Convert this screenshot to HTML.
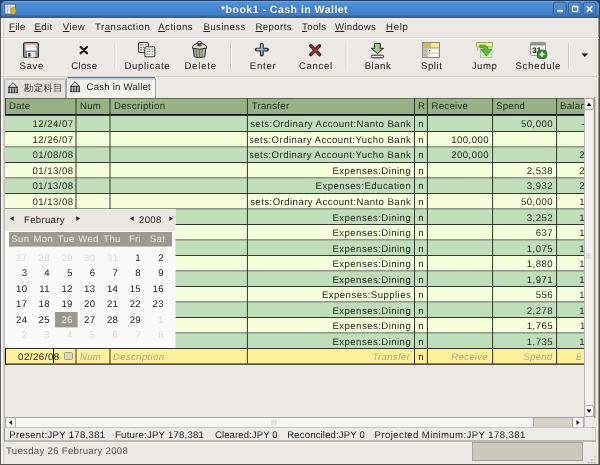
<!DOCTYPE html>
<html><head><meta charset="utf-8">
<style>
*{box-sizing:border-box;margin:0;padding:0}
html,body{text-rendering:geometricPrecision;width:600px;height:465px;overflow:hidden;background:#edebe7;font-family:"Liberation Sans",sans-serif;font-size:9.6px;color:#1e1e1e}
.a{position:absolute;white-space:nowrap}
svg{position:absolute;left:0;top:0}
u{text-decoration:underline;text-underline-offset:0.6px;text-decoration-thickness:1px}
</style></head><body>
<div style="position:absolute;left:0;top:0;width:600px;height:465px;overflow:hidden;will-change:transform">

<svg width="600" height="465" viewBox="0 0 600 465">
<defs>
<linearGradient id="tg" x1="0" y1="0" x2="0" y2="18" gradientUnits="userSpaceOnUse">
 <stop offset="0" stop-color="#77a8de"/><stop offset="0.06" stop-color="#77a8de"/><stop offset="0.16" stop-color="#4b90da"/>
 <stop offset="0.5" stop-color="#4487d0"/><stop offset="0.83" stop-color="#3e7ec5"/>
 <stop offset="0.88" stop-color="#3a6aa6"/><stop offset="1" stop-color="#2f5a8e"/>
</linearGradient>
<linearGradient id="wbg" x1="0" y1="0" x2="0" y2="1">
 <stop offset="0" stop-color="#5590d4"/><stop offset="1" stop-color="#407dc2"/>
</linearGradient>
</defs>
<rect x="0" y="0" width="600" height="465" fill="#ece9e5"/>
<rect x="0" y="0" width="600" height="8" fill="#20406a"/>
<rect x="0" y="8" width="1" height="457" fill="#5d5e5a"/>
<rect x="1" y="18" width="2" height="446" fill="#f5f4ef"/>
<rect x="3" y="18" width="1" height="446" fill="#d2cec8"/>
<rect x="4" y="98" width="1" height="320" fill="#c2beb8"/>
<rect x="599" y="8" width="1" height="457" fill="#524c47"/>
<rect x="598" y="18" width="1" height="446" fill="#9a948f"/>
<rect x="0" y="464" width="600" height="1" fill="#55524e"/>
<path d="M0 18 L0 6 Q0 0 6 0 L594 0 Q600 0 600 6 L600 18 Z" fill="#20406a"/>
<path d="M1 18 L1 6 Q1 1 6 1 L594 1 Q599 1 599 6 L599 18 Z" fill="url(#tg)"/>
<rect x="553.5" y="2.3" width="12.5" height="12" rx="2" fill="url(#wbg)" stroke="#2c5a92" stroke-width="1"/>
<rect x="554.5" y="3.3" width="10.5" height="10" rx="1.5" fill="none" stroke="#6fa2dc" stroke-width="0.6" opacity="0.6"/>
<rect x="557.0" y="9.8" width="6" height="2" fill="#f4f8fc"/>
<rect x="568.5" y="2.3" width="12.5" height="12" rx="2" fill="url(#wbg)" stroke="#2c5a92" stroke-width="1"/>
<rect x="569.5" y="3.3" width="10.5" height="10" rx="1.5" fill="none" stroke="#6fa2dc" stroke-width="0.6" opacity="0.6"/>
<rect x="572.5" y="6.4" width="5.2" height="5" fill="none" stroke="#f4f8fc" stroke-width="1.1"/>
<rect x="572.0" y="5.9" width="6.2" height="1.4" fill="#f4f8fc"/>
<rect x="583.3" y="2.3" width="12.5" height="12" rx="2" fill="url(#wbg)" stroke="#2c5a92" stroke-width="1"/>
<rect x="584.3" y="3.3" width="10.5" height="10" rx="1.5" fill="none" stroke="#6fa2dc" stroke-width="0.6" opacity="0.6"/>
<path d="M586.9 6.3L592.1999999999999 11.6M592.1999999999999 6.3L586.9 11.6" stroke="#f4f8fc" stroke-width="1.6"/>
<rect x="4.8" y="4.2" width="10.6" height="9.8" fill="#f1f3ef" stroke="#4f5d78" stroke-width="0.8"/>
<path d="M7.6 5 V13.5 M10.6 5 V13.5 M5.5 7 H15 M5.5 10 H15" stroke="#a9b3b0" stroke-width="0.7"/>
<rect x="11.2" y="7.4" width="4.6" height="7" rx="2" fill="#d9c31f" stroke="#7f700d" stroke-width="0.5"/>
<path d="M11.5 9.6 H15.5 M11.5 11.8 H15.5" stroke="#b19c12" stroke-width="0.6"/>
<rect x="1" y="37" width="598" height="1" fill="#dcd8d2"/>
<rect x="1" y="38" width="598" height="1" fill="#f9f8f6"/>
<rect x="1" y="76" width="598" height="1" fill="#d5d1cb"/>
<rect x="114.5" y="43" width="1" height="26" fill="#d0cbc4"/>
<rect x="115.5" y="43" width="1" height="26" fill="#f9f8f6"/>
<rect x="230.0" y="43" width="1" height="26" fill="#d0cbc4"/>
<rect x="231.0" y="43" width="1" height="26" fill="#f9f8f6"/>
<rect x="345.5" y="43" width="1" height="26" fill="#d0cbc4"/>
<rect x="346.5" y="43" width="1" height="26" fill="#f9f8f6"/>
<rect x="568.0" y="43" width="1" height="26" fill="#d0cbc4"/>
<rect x="569.0" y="43" width="1" height="26" fill="#f9f8f6"/>
<path d="M4 98 L4 80 Q4 78.5 5.5 78.5 L64.5 78.5 Q66 78.5 66 80 L66 98 Z" fill="#e3dfda"/>
<path d="M4.5 98 L4.5 80 Q4.5 79 5.5 79 L64.5 79 Q65.5 79 65.5 80 L65.5 98" fill="none" stroke="#b3aea6" stroke-width="1"/>
<path d="M66.5 98 L66.5 79 Q66.5 77 68.5 77 L153.5 77 Q155.5 77 155.5 79 L155.5 98 Z" fill="#f3f1ee"/>
<path d="M66.5 98 L66.5 79 Q66.5 77.5 68.5 77.5 L153.5 77.5 Q155.5 77.5 155.5 79 L155.5 98" fill="none" stroke="#a9a49c" stroke-width="1"/>
<rect x="68" y="77" width="87" height="1.5" fill="#55799f"/>
<rect x="68" y="78.5" width="87" height="1.2" fill="#b8d6f2"/>
<rect x="5" y="98" width="579" height="16" fill="#96b183"/>
<rect x="5" y="98" width="579" height="1" fill="#5d6f52"/>
<rect x="5" y="98" width="1" height="17" fill="#3d4a36"/>
<rect x="5" y="114" width="579" height="1.8" fill="#0b0d0a"/>
<rect x="5" y="116.0" width="579" height="15.0" fill="#bfdeb9"/>
<rect x="5" y="131.0" width="579" height="1" fill="#2e3a2b"/>
<rect x="5" y="132.0" width="579" height="14.5" fill="#f6ffdb"/>
<rect x="5" y="146.5" width="579" height="1" fill="#2e3a2b"/>
<rect x="5" y="147.5" width="579" height="14.5" fill="#bfdeb9"/>
<rect x="5" y="162.0" width="579" height="1" fill="#2e3a2b"/>
<rect x="5" y="163.0" width="579" height="14.5" fill="#f6ffdb"/>
<rect x="5" y="177.5" width="579" height="1" fill="#2e3a2b"/>
<rect x="5" y="178.5" width="579" height="14.5" fill="#bfdeb9"/>
<rect x="5" y="193.0" width="579" height="1" fill="#2e3a2b"/>
<rect x="5" y="194.0" width="579" height="14.5" fill="#f6ffdb"/>
<rect x="5" y="208.5" width="579" height="1" fill="#2e3a2b"/>
<rect x="5" y="209.5" width="579" height="14.5" fill="#bfdeb9"/>
<rect x="5" y="224.0" width="579" height="1" fill="#2e3a2b"/>
<rect x="5" y="225.0" width="579" height="14.5" fill="#f6ffdb"/>
<rect x="5" y="239.5" width="579" height="1" fill="#2e3a2b"/>
<rect x="5" y="240.5" width="579" height="14.5" fill="#bfdeb9"/>
<rect x="5" y="255.0" width="579" height="1" fill="#2e3a2b"/>
<rect x="5" y="256.0" width="579" height="14.5" fill="#f6ffdb"/>
<rect x="5" y="270.5" width="579" height="1" fill="#2e3a2b"/>
<rect x="5" y="271.5" width="579" height="14.5" fill="#bfdeb9"/>
<rect x="5" y="286.0" width="579" height="1" fill="#2e3a2b"/>
<rect x="5" y="287.0" width="579" height="14.5" fill="#f6ffdb"/>
<rect x="5" y="301.5" width="579" height="1" fill="#2e3a2b"/>
<rect x="5" y="302.5" width="579" height="14.5" fill="#bfdeb9"/>
<rect x="5" y="317.0" width="579" height="1" fill="#2e3a2b"/>
<rect x="5" y="318.0" width="579" height="14.5" fill="#f6ffdb"/>
<rect x="5" y="332.5" width="579" height="1" fill="#2e3a2b"/>
<rect x="5" y="333.5" width="579" height="14.5" fill="#bfdeb9"/>
<rect x="5" y="348.0" width="579" height="1" fill="#2e3a2b"/>
<rect x="5" y="349.0" width="579" height="14.5" fill="#ffef98"/>
<rect x="5" y="363.5" width="579" height="1.2" fill="#1a1a10"/>
<rect x="5" y="348" width="1" height="16" fill="#1a1a10"/>
<rect x="75.5" y="98" width="1" height="266" fill="#2e3a2b"/>
<rect x="109.5" y="98" width="1" height="266" fill="#2e3a2b"/>
<rect x="246.9" y="98" width="1" height="266" fill="#2e3a2b"/>
<rect x="414.0" y="98" width="1" height="266" fill="#2e3a2b"/>
<rect x="426.9" y="98" width="1" height="266" fill="#2e3a2b"/>
<rect x="492.1" y="98" width="1" height="266" fill="#2e3a2b"/>
<rect x="556.1" y="98" width="1" height="266" fill="#2e3a2b"/>
<rect x="584" y="98" width="10" height="319" fill="#f4f2ef"/>
<rect x="584.5" y="98.5" width="9.5" height="318" fill="none" stroke="#b8b3ab" stroke-width="1"/>
<rect x="594" y="97" width="1" height="321" fill="#a09a93"/>
<rect x="595" y="97" width="1" height="321" fill="#c8c2bb"/>
<rect x="584.5" y="98.5" width="9" height="11" rx="1.5" fill="#f8f7f5" stroke="#b0aba3"/>
<rect x="584.5" y="405.5" width="9" height="11" rx="1.5" fill="#f8f7f5" stroke="#b0aba3"/>
<path d="M586.5 106 L589 102.5 L591.5 106 Z" fill="#111"/>
<path d="M586.5 409.5 L589 413 L591.5 409.5 Z" fill="#111"/>
<rect x="586" y="253.5" width="5" height="0.8" fill="#c9c4bc"/>
<rect x="586" y="255.5" width="5" height="0.8" fill="#c9c4bc"/>
<rect x="586" y="257.5" width="5" height="0.8" fill="#c9c4bc"/>
<rect x="5" y="417.5" width="579" height="10" fill="#d6d2ca" stroke="#a39e96" stroke-width="1"/>
<rect x="5.5" y="417.5" width="528" height="10" rx="1.5" fill="#f6f5f2" stroke="#b0aba3"/>
<rect x="5.5" y="417.5" width="10" height="10" rx="1.5" fill="#f8f7f5" stroke="#b0aba3"/>
<rect x="572.5" y="417.5" width="11" height="10" rx="1.5" fill="#f8f7f5" stroke="#b0aba3"/>
<path d="M12 420 L9 422.5 L12 425 Z" fill="#111"/>
<path d="M576.5 420 L579.5 422.5 L576.5 425 Z" fill="#111"/>
<rect x="271.5" y="420" width="0.8" height="5" fill="#c9c4bc"/>
<rect x="273.5" y="420" width="0.8" height="5" fill="#c9c4bc"/>
<rect x="275.5" y="420" width="0.8" height="5" fill="#c9c4bc"/>
<rect x="4.5" y="427.5" width="591" height="13.5" fill="#edebe7" stroke="#c9c4bc" stroke-width="1"/>
<rect x="4" y="428" width="1" height="13.5" fill="#9d988f"/>
<rect x="4" y="440.5" width="592" height="1" fill="#9d988f"/>
<rect x="472.5" y="442.5" width="110" height="18" fill="#cdc8bd" stroke="#a9a499" stroke-width="1"/>
<rect x="594" y="456" width="1.5" height="1.5" fill="#bdb8b0"/>
<rect x="591" y="459" width="1.5" height="1.5" fill="#bdb8b0"/>
<rect x="594" y="459" width="1.5" height="1.5" fill="#bdb8b0"/>
<rect x="588" y="462" width="1.5" height="1.5" fill="#bdb8b0"/>
<rect x="591" y="462" width="1.5" height="1.5" fill="#bdb8b0"/>
<rect x="594" y="462" width="1.5" height="1.5" fill="#bdb8b0"/>
<rect x="23.5" y="42.5" width="15" height="15" rx="1.8" fill="#85909c" stroke="#2c2f33" stroke-width="1.1"/>
<rect x="25.5" y="43.5" width="11" height="7" fill="#f6f6f6"/><rect x="25.5" y="43.5" width="11" height="1.3" fill="#d98a8a"/>
<rect x="25.5" y="46.5" width="11" height="0.6" fill="#f0c8c8"/>
<rect x="27" y="52" width="8.5" height="5.5" fill="#e4e6e8"/><rect x="28.3" y="53" width="2.2" height="3.6" fill="#2a2a2a"/>
<path d="M80.6 47 L87 53.3 M87 47 L80.6 53.3" stroke="#111" stroke-width="2.1" stroke-linecap="round"/>
<rect x="138.5" y="42.5" width="10" height="10" rx="1.5" fill="#f4f4f4" stroke="#383838" stroke-width="1.1"/>
<rect x="140.0" y="44.2" width="2" height="1.2" fill="#8a8a8a"/>
<rect x="142.6" y="44.2" width="1.4" height="1.2" fill="#8a8a8a"/>
<rect x="145.2" y="44.2" width="1.4" height="1.2" fill="#8a8a8a"/>
<rect x="140.0" y="46.7" width="2" height="1.2" fill="#8a8a8a"/>
<rect x="142.6" y="46.7" width="1.4" height="1.2" fill="#8a8a8a"/>
<rect x="145.2" y="46.7" width="1.4" height="1.2" fill="#8a8a8a"/>
<rect x="140.0" y="49.2" width="2" height="1.2" fill="#8a8a8a"/>
<rect x="142.6" y="49.2" width="1.4" height="1.2" fill="#8a8a8a"/>
<rect x="145.2" y="49.2" width="1.4" height="1.2" fill="#8a8a8a"/>
<rect x="144.8" y="46.8" width="10" height="10" rx="1.5" fill="#f4f4f4" stroke="#383838" stroke-width="1.1"/>
<rect x="146.3" y="48.5" width="2" height="1.2" fill="#8a8a8a"/>
<rect x="148.9" y="48.5" width="1.4" height="1.2" fill="#8a8a8a"/>
<rect x="151.5" y="48.5" width="1.4" height="1.2" fill="#8a8a8a"/>
<rect x="146.3" y="51.0" width="2" height="1.2" fill="#8a8a8a"/>
<rect x="148.9" y="51.0" width="1.4" height="1.2" fill="#8a8a8a"/>
<rect x="151.5" y="51.0" width="1.4" height="1.2" fill="#8a8a8a"/>
<rect x="146.3" y="53.5" width="2" height="1.2" fill="#8a8a8a"/>
<rect x="148.9" y="53.5" width="1.4" height="1.2" fill="#8a8a8a"/>
<rect x="151.5" y="53.5" width="1.4" height="1.2" fill="#8a8a8a"/>
<path d="M193.2 48.5 L194.2 56.8 Q199.5 58.6 204.8 56.8 L205.8 48.5 Z" fill="#a3a395" stroke="#2b2b25" stroke-width="1"/>
<path d="M196.3 49.5 L196.8 56.8 M199.5 50 L199.5 57.5 M202.7 49.5 L202.2 56.8" stroke="#6c6c60" stroke-width="0.9"/>
<path d="M203.5 49.5 L203 56.5" stroke="#e8e8e0" stroke-width="0.6"/>
<path d="M192.3 48.2 Q192.3 43.6 199.5 43.3 Q206.7 43.6 206.7 48.2 Q199.5 50.2 192.3 48.2 Z" fill="#dadacb" stroke="#2b2b25" stroke-width="1"/>
<path d="M196.8 43.6 Q197 41.5 199.5 41.4 Q202 41.5 202.2 43.6" fill="none" stroke="#2b2b25" stroke-width="1"/>
<ellipse cx="199.5" cy="45.2" rx="2.3" ry="1.1" fill="#3c3c34"/>
<path d="M261.8 44.6 V54.6 M256.6 49.6 H267" stroke="#1f2326" stroke-width="3.8" stroke-linecap="round"/>
<path d="M261.8 45 V54.2 M257 49.6 H266.6" stroke="#8aa3bf" stroke-width="1.8" stroke-linecap="round"/>
<path d="M261.8 45.2 V49 M257.2 49.2 H261" stroke="#c6d6e8" stroke-width="0.8" stroke-linecap="round"/>
<path d="M310.8 45.8 L319.6 54.6 M319.6 45.8 L310.8 54.6" stroke="#3a1c20" stroke-width="3.4" stroke-linecap="round"/>
<path d="M311.3 46.3 L319.1 54.1 M319.1 46.3 L311.3 54.1" stroke="#a23341" stroke-width="1.6" stroke-linecap="round"/>
<defs><linearGradient id="bg1" x1="0" y1="0" x2="1" y2="0"><stop offset="0" stop-color="#cfe3c0"/><stop offset="0.5" stop-color="#a6c794"/><stop offset="1" stop-color="#6e9460"/></linearGradient></defs>
<path d="M374.6 43.5 H380.4 V48.3 H383.6 L377.5 53.6 L371.4 48.3 H374.6 Z" fill="url(#bg1)" stroke="#1f2a1a" stroke-width="1" stroke-linejoin="round"/>
<rect x="371.5" y="55.2" width="12" height="2.6" rx="1" fill="#e4eadc" stroke="#262b22" stroke-width="1"/>
<rect x="422.5" y="42.5" width="17" height="15" fill="#d6d4ce" stroke="#8d8b86" stroke-width="1"/>
<rect x="423" y="43" width="8.5" height="4.4" fill="#c2c35e"/><rect x="431.5" y="43" width="7.5" height="4.4" fill="#eef07e"/>
<rect x="423" y="47.4" width="16" height="0.8" fill="#a9a7a0"/>
<rect x="423" y="48.2" width="4.6" height="9" fill="#c3c1bb"/>
<rect x="428.3" y="49.3" width="10" height="3" fill="#fbfbfb"/><rect x="428.3" y="53.6" width="10" height="3" fill="#fbfbfb"/>
<rect x="429" y="50" width="1.3" height="1.3" fill="#333"/>
<rect x="424.5" y="50.3" width="1.5" height="0.8" fill="#8d8b86"/><rect x="424.5" y="54.5" width="1.5" height="0.8" fill="#8d8b86"/>
<rect x="480.5" y="47" width="11.5" height="10.5" fill="#d3efc2" stroke="#a6c894" stroke-width="0.8"/>
<rect x="477" y="47.5" width="1.4" height="3.2" fill="#b9bdb5"/>
<rect x="476.5" y="42.5" width="16" height="4.2" fill="#e6f09a" stroke="#a4ae58" stroke-width="1"/>
<path d="M479.8 45.3 Q487.8 43.6 488 49.3 L491.8 49.3 L486.4 56.2 L481 49.3 L484.6 49.3 Q484.3 47.3 479.8 47.6 Z" fill="#62bb2e" stroke="#3a8a1e" stroke-width="0.7" stroke-linejoin="round"/>
<rect x="530.5" y="42.5" width="15" height="13" rx="1" fill="#f1f1ef" stroke="#9a9a96" stroke-width="1"/>
<rect x="530.5" y="42.5" width="15" height="3" fill="#8f8f8b"/>
<text x="532.3" y="53" font-family="Liberation Sans" font-weight="bold" font-size="8" fill="#222">31</text>
<rect x="537.3" y="50.2" width="9.4" height="8.2" rx="2.5" fill="#2f8f2c" stroke="#1b5f19" stroke-width="0.7"/>
<path d="M542 51.8 V56.8 M539.5 54.3 H544.5" stroke="#e2ffd8" stroke-width="1.7"/>
<path d="M581.5 53.5 L588 53.5 L584.75 57 Z" fill="#111"/>
<path d="M8.6 87.2 L13 82.8 L17.4 87.2 Z" fill="#f7f7f7" stroke="#2a2a2a" stroke-width="0.9" stroke-linejoin="round"/>
<rect x="8" y="87.2" width="10" height="1.1" fill="#2a2a2a"/>
<rect x="8.3" y="88.3" width="9.4" height="3.6" fill="#c8c8c8"/>
<rect x="8.4" y="88.3" width="1.3" height="3.6" fill="#3a3a3a"/>
<rect x="11.15" y="88.3" width="1.3" height="3.6" fill="#3a3a3a"/>
<rect x="13.9" y="88.3" width="1.3" height="3.6" fill="#3a3a3a"/>
<rect x="16.65" y="88.3" width="1.3" height="3.6" fill="#3a3a3a"/>
<rect x="8" y="91.9" width="10" height="1.2" fill="#2a2a2a"/>
<rect x="9.8" y="92.1" width="0.8" height="0.8" fill="#bbb"/>
<rect x="12.55" y="92.1" width="0.8" height="0.8" fill="#bbb"/>
<rect x="15.3" y="92.1" width="0.8" height="0.8" fill="#bbb"/>
<rect x="18.05" y="92.1" width="0.8" height="0.8" fill="#bbb"/>
<path d="M70.6 86.2 L75 81.8 L79.4 86.2 Z" fill="#f7f7f7" stroke="#2a2a2a" stroke-width="0.9" stroke-linejoin="round"/>
<rect x="70" y="86.2" width="10" height="1.1" fill="#2a2a2a"/>
<rect x="70.3" y="87.3" width="9.4" height="3.6" fill="#c8c8c8"/>
<rect x="70.4" y="87.3" width="1.3" height="3.6" fill="#3a3a3a"/>
<rect x="73.15" y="87.3" width="1.3" height="3.6" fill="#3a3a3a"/>
<rect x="75.9" y="87.3" width="1.3" height="3.6" fill="#3a3a3a"/>
<rect x="78.65" y="87.3" width="1.3" height="3.6" fill="#3a3a3a"/>
<rect x="70" y="90.9" width="10" height="1.2" fill="#2a2a2a"/>
<rect x="71.8" y="91.1" width="0.8" height="0.8" fill="#bbb"/>
<rect x="74.55" y="91.1" width="0.8" height="0.8" fill="#bbb"/>
<rect x="77.3" y="91.1" width="0.8" height="0.8" fill="#bbb"/>
<rect x="80.05" y="91.1" width="0.8" height="0.8" fill="#bbb"/>
</svg>
<div class="a" style="left:221px;top:3.57px;font-size:10.6px;line-height:12.72px;color:#ffffff;letter-spacing:0.45px;font-weight:bold;text-shadow:0 0 1px #274a78;">*book1 - Cash in Wallet</div>
<div class="a" style="left:9px;top:22.41px;font-size:9.6px;line-height:11.52px;color:#202020;letter-spacing:0.3px;"><u>F</u>ile</div>
<div class="a" style="left:34.5px;top:22.41px;font-size:9.6px;line-height:11.52px;color:#202020;letter-spacing:0.4px;"><u>E</u>dit</div>
<div class="a" style="left:62.8px;top:22.41px;font-size:9.6px;line-height:11.52px;color:#202020;letter-spacing:0.4px;"><u>V</u>iew</div>
<div class="a" style="left:95px;top:22.41px;font-size:9.6px;line-height:11.52px;color:#202020;letter-spacing:0.5px;">Tr<u>a</u>nsaction</div>
<div class="a" style="left:158.2px;top:22.41px;font-size:9.6px;line-height:11.52px;color:#202020;letter-spacing:0.5px;"><u>A</u>ctions</div>
<div class="a" style="left:203.5px;top:22.41px;font-size:9.6px;line-height:11.52px;color:#202020;letter-spacing:0.4px;"><u>B</u>usiness</div>
<div class="a" style="left:255.5px;top:22.41px;font-size:9.6px;line-height:11.52px;color:#202020;letter-spacing:0.4px;"><u>R</u>eports</div>
<div class="a" style="left:302px;top:22.41px;font-size:9.6px;line-height:11.52px;color:#202020;letter-spacing:0.4px;"><u>T</u>ools</div>
<div class="a" style="left:335px;top:22.41px;font-size:9.6px;line-height:11.52px;color:#202020;letter-spacing:0.3px;"><u>W</u>indows</div>
<div class="a" style="left:386px;top:22.41px;font-size:9.6px;line-height:11.52px;color:#202020;letter-spacing:0.7px;"><u>H</u>elp</div>
<div class="a" style="left:19.6px;top:60.51px;font-size:9.6px;line-height:11.52px;color:#202020;letter-spacing:0.6px;">Save</div>
<div class="a" style="left:71.3px;top:60.51px;font-size:9.6px;line-height:11.52px;color:#202020;letter-spacing:0.3px;">Close</div>
<div class="a" style="left:124.5px;top:60.51px;font-size:9.6px;line-height:11.52px;color:#202020;letter-spacing:0.63px;">Duplicate</div>
<div class="a" style="left:184.4px;top:60.51px;font-size:9.6px;line-height:11.52px;color:#202020;letter-spacing:0.8px;">Delete</div>
<div class="a" style="left:249.7px;top:60.51px;font-size:9.6px;line-height:11.52px;color:#202020;letter-spacing:0.8px;">Enter</div>
<div class="a" style="left:299px;top:60.51px;font-size:9.6px;line-height:11.52px;color:#202020;letter-spacing:0.63px;">Cancel</div>
<div class="a" style="left:364.7px;top:60.51px;font-size:9.6px;line-height:11.52px;color:#202020;letter-spacing:0.5px;">Blank</div>
<div class="a" style="left:421px;top:60.51px;font-size:9.6px;line-height:11.52px;color:#202020;letter-spacing:0.55px;">Split</div>
<div class="a" style="left:471.7px;top:60.51px;font-size:9.6px;line-height:11.52px;color:#202020;letter-spacing:0.55px;">Jump</div>
<div class="a" style="left:515.5px;top:60.51px;font-size:9.6px;line-height:11.52px;color:#202020;letter-spacing:0.7px;">Schedule</div>
<div class="a" style="left:24px;top:82.79px;font-size:9.2px;line-height:11.04px;color:#333;letter-spacing:0.6px;">勘定科目</div>
<div class="a" style="left:86.6px;top:82.41px;font-size:9.6px;line-height:11.52px;color:#222;letter-spacing:0.2px;">Cash in Wallet</div>
<div class="a" style="left:9px;top:101.01px;font-size:9.6px;line-height:11.52px;color:#1f2a1c;letter-spacing:0.3px;">Date</div>
<div class="a" style="left:80px;top:101.01px;font-size:9.6px;line-height:11.52px;color:#1f2a1c;letter-spacing:0.3px;">Num</div>
<div class="a" style="left:114px;top:101.01px;font-size:9.6px;line-height:11.52px;color:#1f2a1c;letter-spacing:0.3px;">Description</div>
<div class="a" style="left:251.7px;top:101.01px;font-size:9.6px;line-height:11.52px;color:#1f2a1c;letter-spacing:0.3px;">Transfer</div>
<div class="a" style="left:418px;top:101.01px;font-size:9.6px;line-height:11.52px;color:#1f2a1c;letter-spacing:0.3px;">R</div>
<div class="a" style="left:431.5px;top:101.01px;font-size:9.6px;line-height:11.52px;color:#1f2a1c;letter-spacing:0.3px;">Receive</div>
<div class="a" style="left:496px;top:101.01px;font-size:9.6px;line-height:11.52px;color:#1f2a1c;letter-spacing:0.3px;">Spend</div>
<div class="a" style="left:557px;top:98px;width:27px;height:17px;overflow:hidden">
<div class="a" style="left:3px;top:3.01px;font-size:9.6px;line-height:11.52px;color:#1f2a1c;letter-spacing:0.3px;">Balance</div>
</div>
<div class="a" style="left:5px;top:116px;width:579px;height:250px;overflow:hidden">
<div class="a" style="left:0px;top:3.21px;font-size:9.6px;line-height:11.52px;color:#1e261c;letter-spacing:0.45px;width:68.5px;text-align:right;">12/24/07</div>
<div class="a" style="left:245px;top:0;width:164px;height:240px;overflow:hidden">
<div class="a" style="left:-200px;top:3.21px;font-size:9.6px;line-height:11.52px;color:#1e261c;letter-spacing:0.45px;width:361.2px;text-align:right;">Assets:Ordinary Account:Nanto Bank</div>
</div>
<div class="a" style="left:409.5px;top:3.21px;font-size:9.6px;line-height:11.52px;color:#1e261c;letter-spacing:0.3px;width:13px;text-align:center;">n</div>
<div class="a" style="left:0px;top:3.21px;font-size:9.6px;line-height:11.52px;color:#1e261c;letter-spacing:0.45px;width:548px;text-align:right;">50,000</div>
<div class="a" style="left:0px;top:3.21px;font-size:9.6px;line-height:11.52px;color:#1e261c;letter-spacing:0.45px;width:612px;text-align:right;">-50,000</div>
<div class="a" style="left:0px;top:18.76px;font-size:9.6px;line-height:11.52px;color:#1e261c;letter-spacing:0.45px;width:68.5px;text-align:right;">12/26/07</div>
<div class="a" style="left:245px;top:0;width:164px;height:240px;overflow:hidden">
<div class="a" style="left:-200px;top:18.76px;font-size:9.6px;line-height:11.52px;color:#1e261c;letter-spacing:0.45px;width:361.2px;text-align:right;">Assets:Ordinary Account:Yucho Bank</div>
</div>
<div class="a" style="left:409.5px;top:18.76px;font-size:9.6px;line-height:11.52px;color:#1e261c;letter-spacing:0.3px;width:13px;text-align:center;">n</div>
<div class="a" style="left:0px;top:18.76px;font-size:9.6px;line-height:11.52px;color:#1e261c;letter-spacing:0.45px;width:484px;text-align:right;">100,000</div>
<div class="a" style="left:0px;top:18.76px;font-size:9.6px;line-height:11.52px;color:#1e261c;letter-spacing:0.45px;width:612px;text-align:right;">50,000</div>
<div class="a" style="left:0px;top:34.31px;font-size:9.6px;line-height:11.52px;color:#1e261c;letter-spacing:0.45px;width:68.5px;text-align:right;">01/08/08</div>
<div class="a" style="left:245px;top:0;width:164px;height:240px;overflow:hidden">
<div class="a" style="left:-200px;top:34.31px;font-size:9.6px;line-height:11.52px;color:#1e261c;letter-spacing:0.45px;width:361.2px;text-align:right;">Assets:Ordinary Account:Yucho Bank</div>
</div>
<div class="a" style="left:409.5px;top:34.31px;font-size:9.6px;line-height:11.52px;color:#1e261c;letter-spacing:0.3px;width:13px;text-align:center;">n</div>
<div class="a" style="left:0px;top:34.31px;font-size:9.6px;line-height:11.52px;color:#1e261c;letter-spacing:0.45px;width:484px;text-align:right;">200,000</div>
<div class="a" style="left:0px;top:34.31px;font-size:9.6px;line-height:11.52px;color:#1e261c;letter-spacing:0.45px;width:612px;text-align:right;">250,000</div>
<div class="a" style="left:0px;top:49.86px;font-size:9.6px;line-height:11.52px;color:#1e261c;letter-spacing:0.45px;width:68.5px;text-align:right;">01/13/08</div>
<div class="a" style="left:245px;top:0;width:164px;height:240px;overflow:hidden">
<div class="a" style="left:-200px;top:49.86px;font-size:9.6px;line-height:11.52px;color:#1e261c;letter-spacing:0.45px;width:361.2px;text-align:right;">Expenses:Dining</div>
</div>
<div class="a" style="left:409.5px;top:49.86px;font-size:9.6px;line-height:11.52px;color:#1e261c;letter-spacing:0.3px;width:13px;text-align:center;">n</div>
<div class="a" style="left:0px;top:49.86px;font-size:9.6px;line-height:11.52px;color:#1e261c;letter-spacing:0.45px;width:548px;text-align:right;">2,538</div>
<div class="a" style="left:0px;top:49.86px;font-size:9.6px;line-height:11.52px;color:#1e261c;letter-spacing:0.45px;width:612px;text-align:right;">247,462</div>
<div class="a" style="left:0px;top:65.41px;font-size:9.6px;line-height:11.52px;color:#1e261c;letter-spacing:0.45px;width:68.5px;text-align:right;">01/13/08</div>
<div class="a" style="left:245px;top:0;width:164px;height:240px;overflow:hidden">
<div class="a" style="left:-200px;top:65.41px;font-size:9.6px;line-height:11.52px;color:#1e261c;letter-spacing:0.45px;width:361.2px;text-align:right;">Expenses:Education</div>
</div>
<div class="a" style="left:409.5px;top:65.41px;font-size:9.6px;line-height:11.52px;color:#1e261c;letter-spacing:0.3px;width:13px;text-align:center;">n</div>
<div class="a" style="left:0px;top:65.41px;font-size:9.6px;line-height:11.52px;color:#1e261c;letter-spacing:0.45px;width:548px;text-align:right;">3,932</div>
<div class="a" style="left:0px;top:65.41px;font-size:9.6px;line-height:11.52px;color:#1e261c;letter-spacing:0.45px;width:612px;text-align:right;">243,530</div>
<div class="a" style="left:0px;top:80.96px;font-size:9.6px;line-height:11.52px;color:#1e261c;letter-spacing:0.45px;width:68.5px;text-align:right;">01/13/08</div>
<div class="a" style="left:245px;top:0;width:164px;height:240px;overflow:hidden">
<div class="a" style="left:-200px;top:80.96px;font-size:9.6px;line-height:11.52px;color:#1e261c;letter-spacing:0.45px;width:361.2px;text-align:right;">Assets:Ordinary Account:Nanto Bank</div>
</div>
<div class="a" style="left:409.5px;top:80.96px;font-size:9.6px;line-height:11.52px;color:#1e261c;letter-spacing:0.3px;width:13px;text-align:center;">n</div>
<div class="a" style="left:0px;top:80.96px;font-size:9.6px;line-height:11.52px;color:#1e261c;letter-spacing:0.45px;width:548px;text-align:right;">50,000</div>
<div class="a" style="left:0px;top:80.96px;font-size:9.6px;line-height:11.52px;color:#1e261c;letter-spacing:0.45px;width:612px;text-align:right;">193,530</div>
<div class="a" style="left:0px;top:96.51px;font-size:9.6px;line-height:11.52px;color:#1e261c;letter-spacing:0.45px;width:68.5px;text-align:right;">01/13/08</div>
<div class="a" style="left:245px;top:0;width:164px;height:240px;overflow:hidden">
<div class="a" style="left:-200px;top:96.51px;font-size:9.6px;line-height:11.52px;color:#1e261c;letter-spacing:0.45px;width:361.2px;text-align:right;">Expenses:Dining</div>
</div>
<div class="a" style="left:409.5px;top:96.51px;font-size:9.6px;line-height:11.52px;color:#1e261c;letter-spacing:0.3px;width:13px;text-align:center;">n</div>
<div class="a" style="left:0px;top:96.51px;font-size:9.6px;line-height:11.52px;color:#1e261c;letter-spacing:0.45px;width:548px;text-align:right;">3,252</div>
<div class="a" style="left:0px;top:96.51px;font-size:9.6px;line-height:11.52px;color:#1e261c;letter-spacing:0.45px;width:612px;text-align:right;">190,278</div>
<div class="a" style="left:0px;top:112.06px;font-size:9.6px;line-height:11.52px;color:#1e261c;letter-spacing:0.45px;width:68.5px;text-align:right;">01/13/08</div>
<div class="a" style="left:245px;top:0;width:164px;height:240px;overflow:hidden">
<div class="a" style="left:-200px;top:112.06px;font-size:9.6px;line-height:11.52px;color:#1e261c;letter-spacing:0.45px;width:361.2px;text-align:right;">Expenses:Dining</div>
</div>
<div class="a" style="left:409.5px;top:112.06px;font-size:9.6px;line-height:11.52px;color:#1e261c;letter-spacing:0.3px;width:13px;text-align:center;">n</div>
<div class="a" style="left:0px;top:112.06px;font-size:9.6px;line-height:11.52px;color:#1e261c;letter-spacing:0.45px;width:548px;text-align:right;">637</div>
<div class="a" style="left:0px;top:112.06px;font-size:9.6px;line-height:11.52px;color:#1e261c;letter-spacing:0.45px;width:612px;text-align:right;">189,641</div>
<div class="a" style="left:0px;top:127.61px;font-size:9.6px;line-height:11.52px;color:#1e261c;letter-spacing:0.45px;width:68.5px;text-align:right;">01/13/08</div>
<div class="a" style="left:245px;top:0;width:164px;height:240px;overflow:hidden">
<div class="a" style="left:-200px;top:127.61px;font-size:9.6px;line-height:11.52px;color:#1e261c;letter-spacing:0.45px;width:361.2px;text-align:right;">Expenses:Dining</div>
</div>
<div class="a" style="left:409.5px;top:127.61px;font-size:9.6px;line-height:11.52px;color:#1e261c;letter-spacing:0.3px;width:13px;text-align:center;">n</div>
<div class="a" style="left:0px;top:127.61px;font-size:9.6px;line-height:11.52px;color:#1e261c;letter-spacing:0.45px;width:548px;text-align:right;">1,075</div>
<div class="a" style="left:0px;top:127.61px;font-size:9.6px;line-height:11.52px;color:#1e261c;letter-spacing:0.45px;width:612px;text-align:right;">188,566</div>
<div class="a" style="left:0px;top:143.16px;font-size:9.6px;line-height:11.52px;color:#1e261c;letter-spacing:0.45px;width:68.5px;text-align:right;">01/13/08</div>
<div class="a" style="left:245px;top:0;width:164px;height:240px;overflow:hidden">
<div class="a" style="left:-200px;top:143.16px;font-size:9.6px;line-height:11.52px;color:#1e261c;letter-spacing:0.45px;width:361.2px;text-align:right;">Expenses:Dining</div>
</div>
<div class="a" style="left:409.5px;top:143.16px;font-size:9.6px;line-height:11.52px;color:#1e261c;letter-spacing:0.3px;width:13px;text-align:center;">n</div>
<div class="a" style="left:0px;top:143.16px;font-size:9.6px;line-height:11.52px;color:#1e261c;letter-spacing:0.45px;width:548px;text-align:right;">1,880</div>
<div class="a" style="left:0px;top:143.16px;font-size:9.6px;line-height:11.52px;color:#1e261c;letter-spacing:0.45px;width:612px;text-align:right;">186,686</div>
<div class="a" style="left:0px;top:158.71px;font-size:9.6px;line-height:11.52px;color:#1e261c;letter-spacing:0.45px;width:68.5px;text-align:right;">01/13/08</div>
<div class="a" style="left:245px;top:0;width:164px;height:240px;overflow:hidden">
<div class="a" style="left:-200px;top:158.71px;font-size:9.6px;line-height:11.52px;color:#1e261c;letter-spacing:0.45px;width:361.2px;text-align:right;">Expenses:Dining</div>
</div>
<div class="a" style="left:409.5px;top:158.71px;font-size:9.6px;line-height:11.52px;color:#1e261c;letter-spacing:0.3px;width:13px;text-align:center;">n</div>
<div class="a" style="left:0px;top:158.71px;font-size:9.6px;line-height:11.52px;color:#1e261c;letter-spacing:0.45px;width:548px;text-align:right;">1,971</div>
<div class="a" style="left:0px;top:158.71px;font-size:9.6px;line-height:11.52px;color:#1e261c;letter-spacing:0.45px;width:612px;text-align:right;">184,715</div>
<div class="a" style="left:0px;top:174.26px;font-size:9.6px;line-height:11.52px;color:#1e261c;letter-spacing:0.45px;width:68.5px;text-align:right;">01/13/08</div>
<div class="a" style="left:245px;top:0;width:164px;height:240px;overflow:hidden">
<div class="a" style="left:-200px;top:174.26px;font-size:9.6px;line-height:11.52px;color:#1e261c;letter-spacing:0.45px;width:361.2px;text-align:right;">Expenses:Supplies</div>
</div>
<div class="a" style="left:409.5px;top:174.26px;font-size:9.6px;line-height:11.52px;color:#1e261c;letter-spacing:0.3px;width:13px;text-align:center;">n</div>
<div class="a" style="left:0px;top:174.26px;font-size:9.6px;line-height:11.52px;color:#1e261c;letter-spacing:0.45px;width:548px;text-align:right;">556</div>
<div class="a" style="left:0px;top:174.26px;font-size:9.6px;line-height:11.52px;color:#1e261c;letter-spacing:0.45px;width:612px;text-align:right;">184,159</div>
<div class="a" style="left:0px;top:189.81px;font-size:9.6px;line-height:11.52px;color:#1e261c;letter-spacing:0.45px;width:68.5px;text-align:right;">01/13/08</div>
<div class="a" style="left:245px;top:0;width:164px;height:240px;overflow:hidden">
<div class="a" style="left:-200px;top:189.81px;font-size:9.6px;line-height:11.52px;color:#1e261c;letter-spacing:0.45px;width:361.2px;text-align:right;">Expenses:Dining</div>
</div>
<div class="a" style="left:409.5px;top:189.81px;font-size:9.6px;line-height:11.52px;color:#1e261c;letter-spacing:0.3px;width:13px;text-align:center;">n</div>
<div class="a" style="left:0px;top:189.81px;font-size:9.6px;line-height:11.52px;color:#1e261c;letter-spacing:0.45px;width:548px;text-align:right;">2,278</div>
<div class="a" style="left:0px;top:189.81px;font-size:9.6px;line-height:11.52px;color:#1e261c;letter-spacing:0.45px;width:612px;text-align:right;">181,881</div>
<div class="a" style="left:0px;top:205.36px;font-size:9.6px;line-height:11.52px;color:#1e261c;letter-spacing:0.45px;width:68.5px;text-align:right;">01/13/08</div>
<div class="a" style="left:245px;top:0;width:164px;height:240px;overflow:hidden">
<div class="a" style="left:-200px;top:205.36px;font-size:9.6px;line-height:11.52px;color:#1e261c;letter-spacing:0.45px;width:361.2px;text-align:right;">Expenses:Dining</div>
</div>
<div class="a" style="left:409.5px;top:205.36px;font-size:9.6px;line-height:11.52px;color:#1e261c;letter-spacing:0.3px;width:13px;text-align:center;">n</div>
<div class="a" style="left:0px;top:205.36px;font-size:9.6px;line-height:11.52px;color:#1e261c;letter-spacing:0.45px;width:548px;text-align:right;">1,765</div>
<div class="a" style="left:0px;top:205.36px;font-size:9.6px;line-height:11.52px;color:#1e261c;letter-spacing:0.45px;width:612px;text-align:right;">180,116</div>
<div class="a" style="left:0px;top:220.91px;font-size:9.6px;line-height:11.52px;color:#1e261c;letter-spacing:0.45px;width:68.5px;text-align:right;">01/13/08</div>
<div class="a" style="left:245px;top:0;width:164px;height:240px;overflow:hidden">
<div class="a" style="left:-200px;top:220.91px;font-size:9.6px;line-height:11.52px;color:#1e261c;letter-spacing:0.45px;width:361.2px;text-align:right;">Expenses:Dining</div>
</div>
<div class="a" style="left:409.5px;top:220.91px;font-size:9.6px;line-height:11.52px;color:#1e261c;letter-spacing:0.3px;width:13px;text-align:center;">n</div>
<div class="a" style="left:0px;top:220.91px;font-size:9.6px;line-height:11.52px;color:#1e261c;letter-spacing:0.45px;width:548px;text-align:right;">1,735</div>
<div class="a" style="left:0px;top:220.91px;font-size:9.6px;line-height:11.52px;color:#1e261c;letter-spacing:0.45px;width:612px;text-align:right;">178,381</div>
<div class="a" style="left:13px;top:236.46px;font-size:9.6px;line-height:11.52px;color:#1e1e1e;letter-spacing:0.55px;">02/26/08</div>
<div class="a" style="left:48px;top:233.3px;width:1px;height:13.7px;background:#111"></div>
<div class="a" style="left:59.2px;top:235.7px;width:8.7px;height:8.8px;border:1px solid #a8a290;border-radius:1.5px;background:#ddd6b8"></div>
<div class="a" style="left:75px;top:236.46px;font-size:9.6px;line-height:11.52px;color:#b2a88a;letter-spacing:0.3px;font-style:italic;">Num</div>
<div class="a" style="left:108px;top:236.46px;font-size:9.6px;line-height:11.52px;color:#b2a88a;letter-spacing:0.3px;font-style:italic;">Description</div>
<div class="a" style="left:0px;top:236.46px;font-size:9.6px;line-height:11.52px;color:#b2a88a;letter-spacing:0.3px;font-style:italic;width:405px;text-align:right;">Transfer</div>
<div class="a" style="left:409.5px;top:236.46px;font-size:9.6px;line-height:11.52px;color:#1e261c;letter-spacing:0.3px;width:13px;text-align:center;">n</div>
<div class="a" style="left:0px;top:236.46px;font-size:9.6px;line-height:11.52px;color:#b2a88a;letter-spacing:0.3px;font-style:italic;width:483px;text-align:right;">Receive</div>
<div class="a" style="left:0px;top:236.46px;font-size:9.6px;line-height:11.52px;color:#b2a88a;letter-spacing:0.3px;font-style:italic;width:547.5px;text-align:right;">Spend</div>
<div class="a" style="left:552px;top:232.55px;width:24px;height:16px;overflow:hidden">
<div class="a" style="left:19px;top:3.91px;font-size:9.6px;line-height:11.52px;color:#b2a88a;letter-spacing:0.3px;font-style:italic;">Balance</div>
</div>
</div>
<svg width="600" height="465" viewBox="0 0 600 465">
<rect x="5" y="209" width="170.5" height="139" fill="#fbfaf9"/>
<rect x="5" y="209" width="170.5" height="22" fill="#ebe8e4"/>
<rect x="9" y="232" width="163" height="14.6" fill="#9f9a8f"/>
<rect x="55" y="312" width="22.6" height="15.4" fill="#9c978c"/>
<path d="M13.6 216.3 L10.2 218.6 L13.6 220.9 Z" fill="#111"/>
<path d="M76.4 216.3 L79.8 218.6 L76.4 220.9 Z" fill="#111"/>
<path d="M133.6 216.3 L130.2 218.6 L133.6 220.9 Z" fill="#111"/>
<path d="M169.4 216.3 L172.8 218.6 L169.4 220.9 Z" fill="#111"/>
</svg>
<div class="a" style="left:24px;top:214.51px;font-size:9.6px;line-height:11.52px;color:#222;letter-spacing:0.3px;">February</div>
<div class="a" style="left:139px;top:214.51px;font-size:9.6px;line-height:11.52px;color:#222;letter-spacing:0.3px;">2008</div>
<div class="a" style="left:0.3000000000000007px;top:234.21px;font-size:9.6px;line-height:11.52px;color:#e9e7e2;letter-spacing:0.3px;width:40px;text-align:center;">Sun</div>
<div class="a" style="left:23.299999999999997px;top:234.21px;font-size:9.6px;line-height:11.52px;color:#e9e7e2;letter-spacing:0.3px;width:40px;text-align:center;">Mon</div>
<div class="a" style="left:46px;top:234.21px;font-size:9.6px;line-height:11.52px;color:#e9e7e2;letter-spacing:0.3px;width:40px;text-align:center;">Tue</div>
<div class="a" style="left:68.5px;top:234.21px;font-size:9.6px;line-height:11.52px;color:#e9e7e2;letter-spacing:0.3px;width:40px;text-align:center;">Wed</div>
<div class="a" style="left:92px;top:234.21px;font-size:9.6px;line-height:11.52px;color:#e9e7e2;letter-spacing:0.3px;width:40px;text-align:center;">Thu</div>
<div class="a" style="left:115px;top:234.21px;font-size:9.6px;line-height:11.52px;color:#e9e7e2;letter-spacing:0.3px;width:40px;text-align:center;">Fri</div>
<div class="a" style="left:137.5px;top:234.21px;font-size:9.6px;line-height:11.52px;color:#e9e7e2;letter-spacing:0.3px;width:40px;text-align:center;">Sat</div>
<div class="a" style="left:-13px;top:252.91px;font-size:9.6px;line-height:11.52px;color:#dcd9d4;letter-spacing:0.3px;width:40.3px;text-align:right;">27</div>
<div class="a" style="left:9.600000000000001px;top:252.91px;font-size:9.6px;line-height:11.52px;color:#dcd9d4;letter-spacing:0.3px;width:40.3px;text-align:right;">28</div>
<div class="a" style="left:32.400000000000006px;top:252.91px;font-size:9.6px;line-height:11.52px;color:#dcd9d4;letter-spacing:0.3px;width:40.3px;text-align:right;">29</div>
<div class="a" style="left:55.099999999999994px;top:252.91px;font-size:9.6px;line-height:11.52px;color:#dcd9d4;letter-spacing:0.3px;width:40.3px;text-align:right;">30</div>
<div class="a" style="left:77.9px;top:252.91px;font-size:9.6px;line-height:11.52px;color:#dcd9d4;letter-spacing:0.3px;width:40.3px;text-align:right;">31</div>
<div class="a" style="left:100.69999999999999px;top:252.91px;font-size:9.6px;line-height:11.52px;color:#222;letter-spacing:0.3px;width:40.3px;text-align:right;">1</div>
<div class="a" style="left:123.5px;top:252.91px;font-size:9.6px;line-height:11.52px;color:#222;letter-spacing:0.3px;width:40.3px;text-align:right;">2</div>
<div class="a" style="left:-13px;top:268.41px;font-size:9.6px;line-height:11.52px;color:#222;letter-spacing:0.3px;width:40.3px;text-align:right;">3</div>
<div class="a" style="left:9.600000000000001px;top:268.41px;font-size:9.6px;line-height:11.52px;color:#222;letter-spacing:0.3px;width:40.3px;text-align:right;">4</div>
<div class="a" style="left:32.400000000000006px;top:268.41px;font-size:9.6px;line-height:11.52px;color:#222;letter-spacing:0.3px;width:40.3px;text-align:right;">5</div>
<div class="a" style="left:55.099999999999994px;top:268.41px;font-size:9.6px;line-height:11.52px;color:#222;letter-spacing:0.3px;width:40.3px;text-align:right;">6</div>
<div class="a" style="left:77.9px;top:268.41px;font-size:9.6px;line-height:11.52px;color:#222;letter-spacing:0.3px;width:40.3px;text-align:right;">7</div>
<div class="a" style="left:100.69999999999999px;top:268.41px;font-size:9.6px;line-height:11.52px;color:#222;letter-spacing:0.3px;width:40.3px;text-align:right;">8</div>
<div class="a" style="left:123.5px;top:268.41px;font-size:9.6px;line-height:11.52px;color:#222;letter-spacing:0.3px;width:40.3px;text-align:right;">9</div>
<div class="a" style="left:-13px;top:283.91px;font-size:9.6px;line-height:11.52px;color:#222;letter-spacing:0.3px;width:40.3px;text-align:right;">10</div>
<div class="a" style="left:9.600000000000001px;top:283.91px;font-size:9.6px;line-height:11.52px;color:#222;letter-spacing:0.3px;width:40.3px;text-align:right;">11</div>
<div class="a" style="left:32.400000000000006px;top:283.91px;font-size:9.6px;line-height:11.52px;color:#222;letter-spacing:0.3px;width:40.3px;text-align:right;">12</div>
<div class="a" style="left:55.099999999999994px;top:283.91px;font-size:9.6px;line-height:11.52px;color:#222;letter-spacing:0.3px;width:40.3px;text-align:right;">13</div>
<div class="a" style="left:77.9px;top:283.91px;font-size:9.6px;line-height:11.52px;color:#222;letter-spacing:0.3px;width:40.3px;text-align:right;">14</div>
<div class="a" style="left:100.69999999999999px;top:283.91px;font-size:9.6px;line-height:11.52px;color:#222;letter-spacing:0.3px;width:40.3px;text-align:right;">15</div>
<div class="a" style="left:123.5px;top:283.91px;font-size:9.6px;line-height:11.52px;color:#222;letter-spacing:0.3px;width:40.3px;text-align:right;">16</div>
<div class="a" style="left:-13px;top:299.41px;font-size:9.6px;line-height:11.52px;color:#222;letter-spacing:0.3px;width:40.3px;text-align:right;">17</div>
<div class="a" style="left:9.600000000000001px;top:299.41px;font-size:9.6px;line-height:11.52px;color:#222;letter-spacing:0.3px;width:40.3px;text-align:right;">18</div>
<div class="a" style="left:32.400000000000006px;top:299.41px;font-size:9.6px;line-height:11.52px;color:#222;letter-spacing:0.3px;width:40.3px;text-align:right;">19</div>
<div class="a" style="left:55.099999999999994px;top:299.41px;font-size:9.6px;line-height:11.52px;color:#222;letter-spacing:0.3px;width:40.3px;text-align:right;">20</div>
<div class="a" style="left:77.9px;top:299.41px;font-size:9.6px;line-height:11.52px;color:#222;letter-spacing:0.3px;width:40.3px;text-align:right;">21</div>
<div class="a" style="left:100.69999999999999px;top:299.41px;font-size:9.6px;line-height:11.52px;color:#222;letter-spacing:0.3px;width:40.3px;text-align:right;">22</div>
<div class="a" style="left:123.5px;top:299.41px;font-size:9.6px;line-height:11.52px;color:#222;letter-spacing:0.3px;width:40.3px;text-align:right;">23</div>
<div class="a" style="left:-13px;top:314.91px;font-size:9.6px;line-height:11.52px;color:#222;letter-spacing:0.3px;width:40.3px;text-align:right;">24</div>
<div class="a" style="left:9.600000000000001px;top:314.91px;font-size:9.6px;line-height:11.52px;color:#222;letter-spacing:0.3px;width:40.3px;text-align:right;">25</div>
<div class="a" style="left:32.400000000000006px;top:314.91px;font-size:9.6px;line-height:11.52px;color:#eeece8;letter-spacing:0.3px;width:40.3px;text-align:right;">26</div>
<div class="a" style="left:55.099999999999994px;top:314.91px;font-size:9.6px;line-height:11.52px;color:#222;letter-spacing:0.3px;width:40.3px;text-align:right;">27</div>
<div class="a" style="left:77.9px;top:314.91px;font-size:9.6px;line-height:11.52px;color:#222;letter-spacing:0.3px;width:40.3px;text-align:right;">28</div>
<div class="a" style="left:100.69999999999999px;top:314.91px;font-size:9.6px;line-height:11.52px;color:#222;letter-spacing:0.3px;width:40.3px;text-align:right;">29</div>
<div class="a" style="left:123.5px;top:314.91px;font-size:9.6px;line-height:11.52px;color:#dcd9d4;letter-spacing:0.3px;width:40.3px;text-align:right;">1</div>
<div class="a" style="left:-13px;top:330.41px;font-size:9.6px;line-height:11.52px;color:#dcd9d4;letter-spacing:0.3px;width:40.3px;text-align:right;">2</div>
<div class="a" style="left:9.600000000000001px;top:330.41px;font-size:9.6px;line-height:11.52px;color:#dcd9d4;letter-spacing:0.3px;width:40.3px;text-align:right;">3</div>
<div class="a" style="left:32.400000000000006px;top:330.41px;font-size:9.6px;line-height:11.52px;color:#dcd9d4;letter-spacing:0.3px;width:40.3px;text-align:right;">4</div>
<div class="a" style="left:55.099999999999994px;top:330.41px;font-size:9.6px;line-height:11.52px;color:#dcd9d4;letter-spacing:0.3px;width:40.3px;text-align:right;">5</div>
<div class="a" style="left:77.9px;top:330.41px;font-size:9.6px;line-height:11.52px;color:#dcd9d4;letter-spacing:0.3px;width:40.3px;text-align:right;">6</div>
<div class="a" style="left:100.69999999999999px;top:330.41px;font-size:9.6px;line-height:11.52px;color:#dcd9d4;letter-spacing:0.3px;width:40.3px;text-align:right;">7</div>
<div class="a" style="left:123.5px;top:330.41px;font-size:9.6px;line-height:11.52px;color:#dcd9d4;letter-spacing:0.3px;width:40.3px;text-align:right;">8</div>
<div class="a" style="left:9.3px;top:429.61px;font-size:9.6px;line-height:11.52px;color:#222;letter-spacing:0.3px;">Present:JPY 178,381</div>
<div class="a" style="left:115px;top:429.61px;font-size:9.6px;line-height:11.52px;color:#222;letter-spacing:0.22px;">Future:JPY 178,381</div>
<div class="a" style="left:215px;top:429.61px;font-size:9.6px;line-height:11.52px;color:#222;letter-spacing:0.07px;">Cleared:JPY 0</div>
<div class="a" style="left:287.3px;top:429.61px;font-size:9.6px;line-height:11.52px;color:#222;letter-spacing:0.13px;">Reconciled:JPY 0</div>
<div class="a" style="left:374.6px;top:429.61px;font-size:9.6px;line-height:11.52px;color:#222;letter-spacing:0.4px;">Projected Minimum:JPY 178,381</div>
<div class="a" style="left:6px;top:446.21px;font-size:9.6px;line-height:11.52px;color:#555;letter-spacing:0.3px;">Tuesday 26 February 2008</div>
</div></body></html>
